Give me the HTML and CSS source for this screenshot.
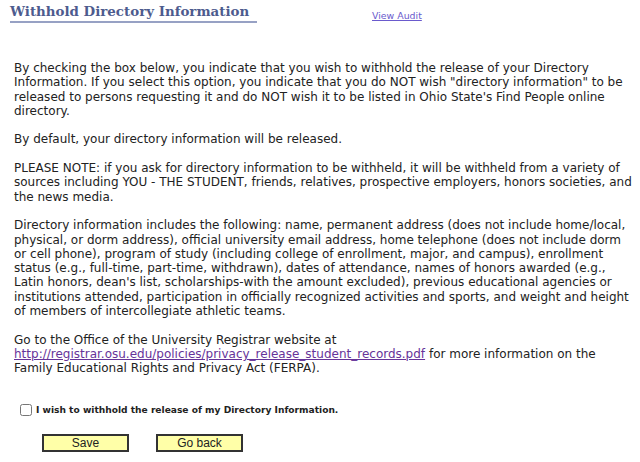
FILE: index.html
```html
<!DOCTYPE html>
<html lang="en">
  <head>
    <meta charset="UTF-8" />
    <title>Withhold Directory Information</title>
    <link rel="stylesheet" href="styles.css">
  </head>
  <body>
    <div class="page-header">
      <h1 class="page-title">Withhold Directory Information</h1>
      <a class="audit-link" href="#">View Audit</a>
    </div>

    <div class="info-text">
      <p>By checking the box below, you indicate that you wish to withhold the release of your Directory Information. If you select this option, you indicate that you do NOT wish "directory information" to be released to persons requesting it and do NOT wish it to be listed in Ohio State's Find People online directory.</p>
      <p>By default, your directory information will be released.</p>
      <p>PLEASE NOTE: if you ask for directory information to be withheld, it will be withheld from a variety of sources including YOU - THE STUDENT, friends, relatives, prospective employers, honors societies, and the news media.</p>
      <p>Directory information includes the following: name, permanent address (does not include home/local, physical, or dorm address), official university email address, home telephone (does not include dorm or cell phone), program of study (including college of enrollment, major, and campus), enrollment status (e.g., full-time, part-time, withdrawn), dates of attendance, names of honors awarded (e.g., Latin honors, dean's list, scholarships-with the amount excluded), previous educational agencies or institutions attended, participation in officially recognized activities and sports, and weight and height of members of intercollegiate athletic teams.</p>
      <p>Go to the Office of the University Registrar website at <a href="#" class="doc-link">http://registrar.osu.edu/policies/privacy_release_student_records.pdf</a> for more information on the Family Educational Rights and Privacy Act (FERPA).</p>
    </div>

    <form class="withhold-form">
      <label class="check-row">
        <input type="checkbox" id="withhold" />
        <span>I wish to withhold the release of my Directory Information.</span>
      </label>
      <div class="buttons">
        <button type="button" class="btn">Save</button>
        <button type="button" class="btn">Go back</button>
      </div>
    </form>
  </body>
</html>
```

FILE: styles.css
```css
* {
  box-sizing: border-box;
}

body {
  margin: 0;
  background: #fff;
  color: #222;
  font-family: "DejaVu Sans", Verdana, sans-serif;
}

.page-header {
  display: flex;
  align-items: flex-start;
  padding: 3px 0 0 10px;
}

.page-title {
  margin: 0;
  width: 247px;
  white-space: nowrap;
  font-family: "DejaVu Serif", Georgia, serif;
  font-size: 13.4px;
  font-weight: bold;
  color: #4d5b8e;
  border-bottom: 2px solid #97a1c4;
  padding-bottom: 2px;
  line-height: 16px;
}

.audit-link {
  margin: 7px 0 0 115px;
  font-size: 9.4px;
  color: #6a5acd;
}

.info-text {
  width: 632px;
  padding: 38px 0 0 14px;
  font-size: 12px;
  line-height: 14.3px;
}

.info-text p {
  margin: 0 0 14.3px;
}

.doc-link {
  color: #663399;
}

.withhold-form {
  padding: 14px 0 0 20px;
}

.check-row {
  display: flex;
  align-items: center;
  gap: 4px;
  font-size: 9.1px;
  font-weight: bold;
}

.check-row input {
  margin: 0;
  width: 12px;
  height: 12px;
}

.buttons {
  display: flex;
  gap: 27px;
  padding: 18px 0 0 22px;
}

.btn {
  width: 87px;
  height: 18px;
  padding: 0;
  background: #ffffa8;
  border: 2px solid #333;
  font-family: "Liberation Sans", Arial, sans-serif;
  font-size: 12px;
  color: #222;
}
```
